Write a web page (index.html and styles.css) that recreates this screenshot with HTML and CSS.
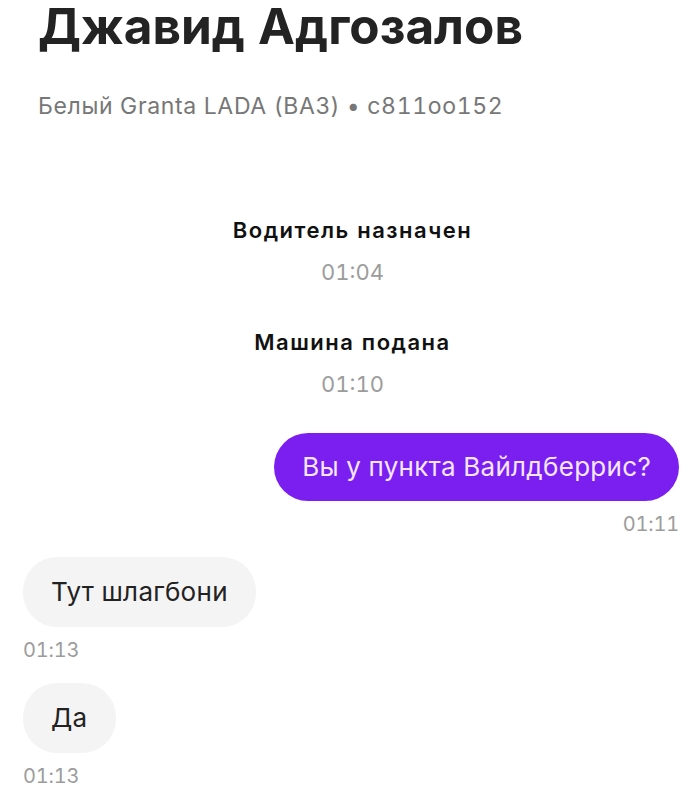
FILE: index.html
```html
<!DOCTYPE html>
<html lang="ru">
<head>
    <meta charset="UTF-8">
    <meta name="viewport" content="width=device-width, initial-scale=1.0">
    <title>Джавид Адгозалов</title>
    <link rel="stylesheet" href="styles.css">
</head>
<body>
    <header class="driver">
        <h1 class="driver-name">Джавид Адгозалов</h1>
        <p class="driver-car">Белый Granta LADA (ВАЗ) • с811оо152</p>
    </header>

    <div class="chat">
        <div class="events">
            <div class="event">
                <div class="event-title">Водитель назначен</div>
                <div class="event-time">01:04</div>
            </div>
            <div class="event">
                <div class="event-title">Машина подана</div>
                <div class="event-time">01:10</div>
            </div>
        </div>

        <div class="msg msg-out">
            <div class="bubble">Вы у пункта Вайлдберрис?</div>
            <div class="msg-time">01:11</div>
        </div>
        <div class="msg msg-in">
            <div class="bubble">Тут шлагбони</div>
            <div class="msg-time">01:13</div>
        </div>
        <div class="msg msg-in">
            <div class="bubble">Да</div>
            <div class="msg-time">01:13</div>
        </div>
    </div>
</body>
</html>
```

FILE: styles.css
```css
body {
    margin: 0;
    padding: 0 21px 0 23px;
    font-family: Inter, Roboto, "Liberation Sans", sans-serif;
    font-variant-numeric: tabular-nums;
    background-color: #fff;
    color: #111;
}

.driver {
    padding-left: 15px;
}

.driver-name {
    margin: 0;
    padding-top: 1px;
    font-size: 49.5px;
    font-weight: 700;
    line-height: 50px;
    color: #232323;
}

.driver-car {
    margin: 41px 0 0;
    font-size: 23px;
    line-height: 28px;
    letter-spacing: 0.65px;
    color: #777;
}

.chat {
    display: flex;
    flex-direction: column;
    padding-top: 97px;
}

.events {
    display: flex;
    flex-direction: column;
    gap: 44px;
    margin-bottom: 36px;
}

.event {
    display: flex;
    flex-direction: column;
    align-items: center;
    padding-left: 3px;
}

.event-title {
    font-size: 22px;
    font-weight: 600;
    line-height: 26px;
    letter-spacing: 1.5px;
    color: #111;
}

.event-time {
    margin-top: 16px;
    font-size: 22px;
    line-height: 26px;
    color: #9c9c9c;
}

.msg {
    display: flex;
    flex-direction: column;
    margin-bottom: 21px;
}

.msg-out {
    align-items: flex-end;
}

.msg-in {
    align-items: flex-start;
}

.bubble {
    font-size: 26px;
    line-height: 30px;
    letter-spacing: 0.3px;
    padding: 19px 28px;
    border-radius: 34px;
}

.msg-out .bubble {
    background-color: #7a1ff0;
    color: #f5e6ff;
}

.msg-in .bubble {
    background-color: #f4f4f5;
    color: #222;
    padding: 20px 28px;
}

.msg-time {
    margin-top: 11px;
    font-size: 20px;
    line-height: 24px;
    letter-spacing: -0.2px;
    color: #9c9c9c;
}
```
